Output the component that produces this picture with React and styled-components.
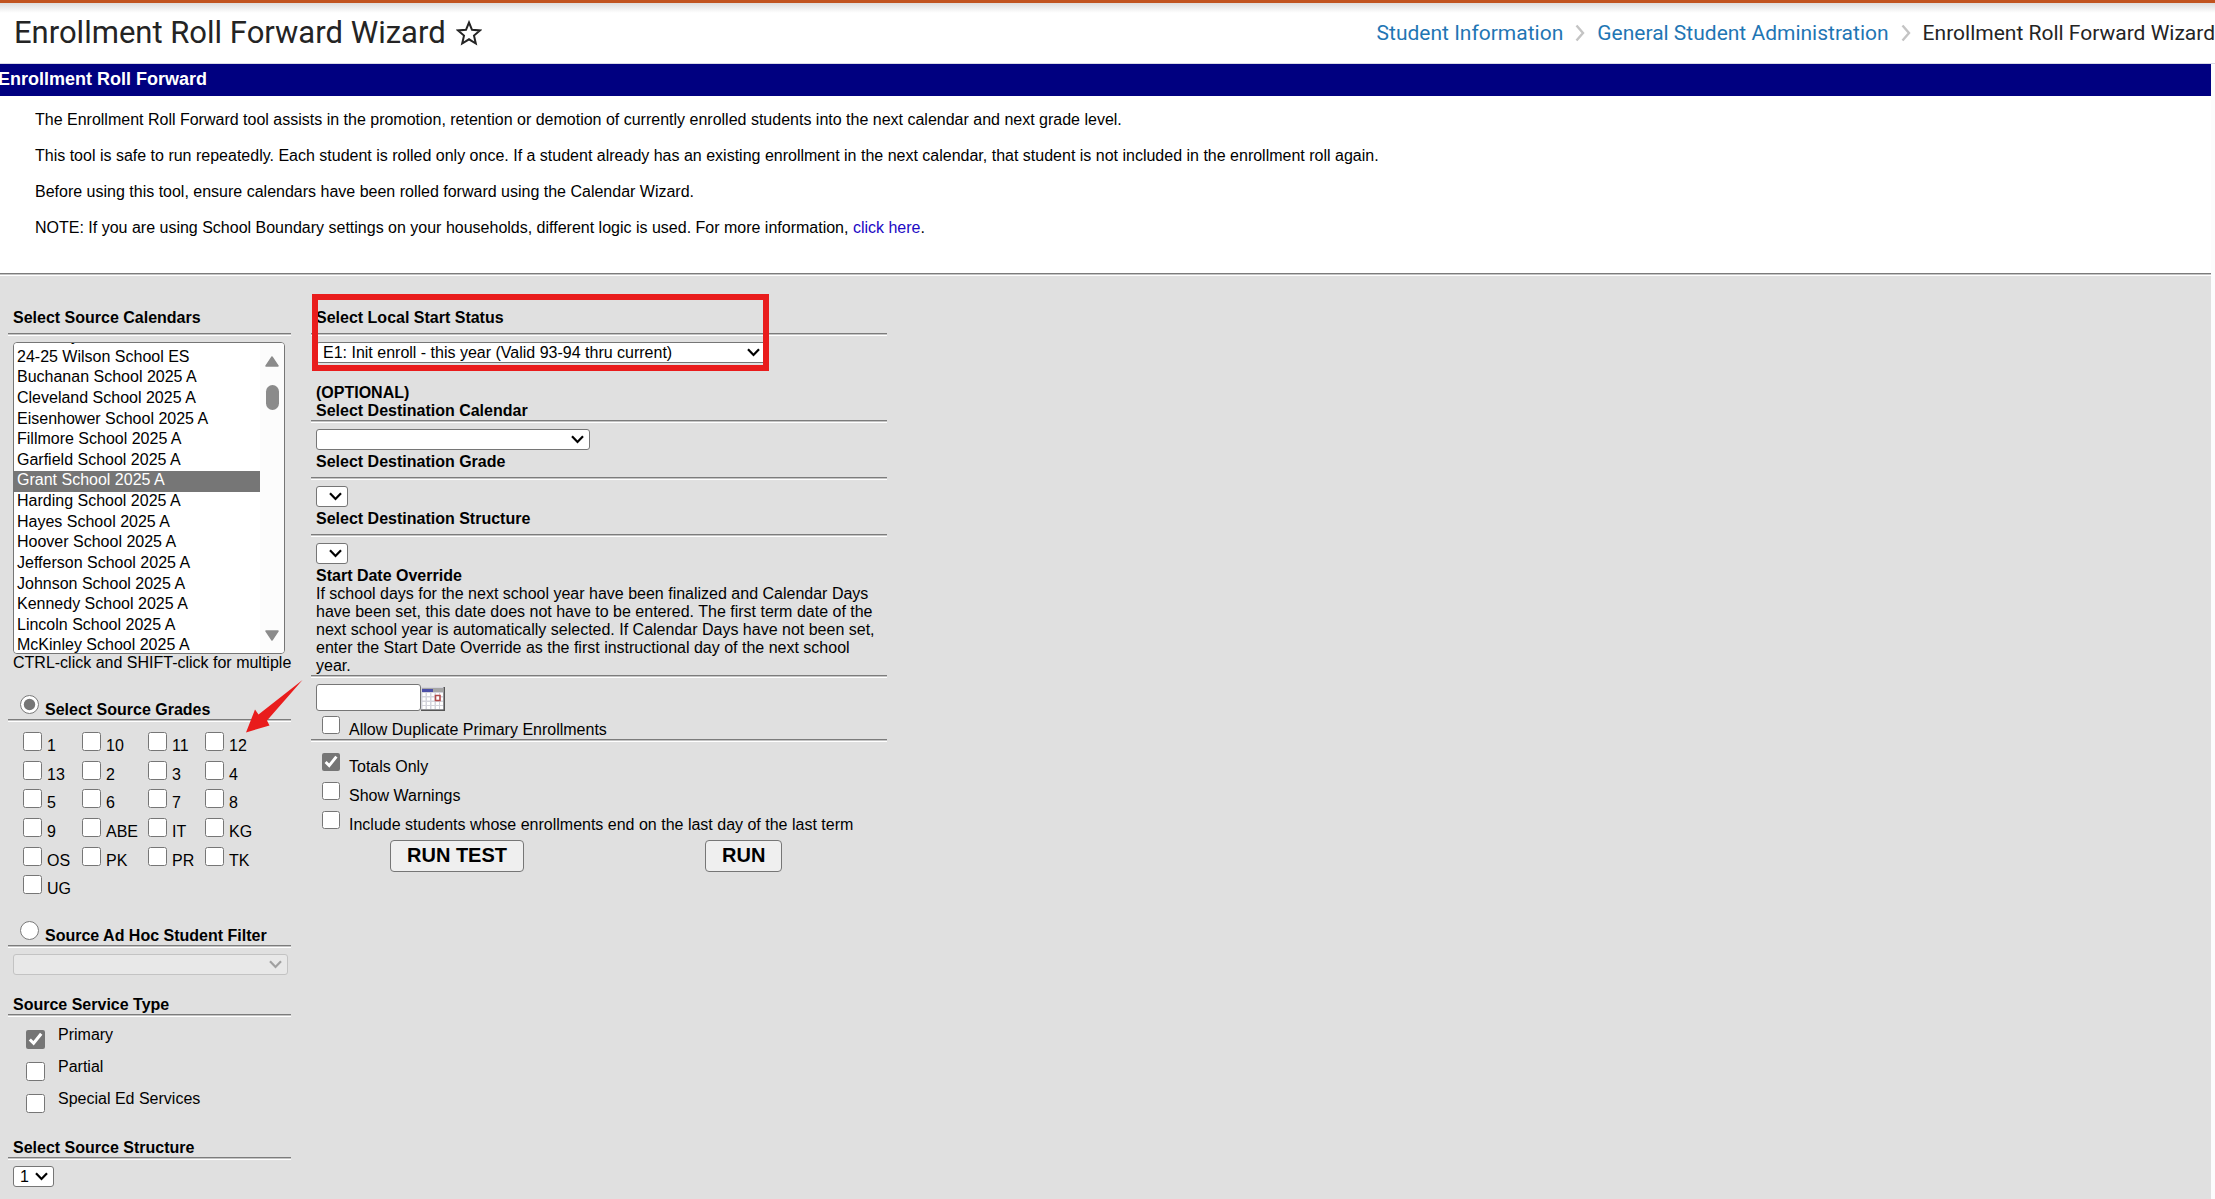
import React, { useLayoutEffect, useRef } from "react";
import styled, { createGlobalStyle } from "styled-components";

const sans = `"Liberation Sans", Arial, Helvetica, sans-serif`;

const GlobalStyle = createGlobalStyle`
  *, *::before, *::after { box-sizing: border-box; }
  html, body { margin: 0; background: #fcfcfc; }
  body {
    overflow-x: hidden;
    font: 16px/18px ${sans};
    color: #000;
  }
  input, select, button { font-family: inherit; margin: 0; }
`;

const Page = styled.div`
  position: relative;
  display: flex;
  flex-direction: column;
  min-height: 100vh;
`;

const TopBar = styled.header`
  display: flex;
  align-items: center;
  justify-content: space-between;
  height: 64px;
  padding-left: 14px;
  border-top: 3px solid #c1531f;
  border-bottom: 1px solid #d9d9e6;
  background: linear-gradient(#dcdcdc, #fff 10px);
  font-family: Roboto, sans-serif;
  white-space: nowrap;
`;

const TitleGroup = styled.div`
  display: flex;
  align-items: center;
  gap: 10px;
`;

const Title = styled.h1`
  margin: 0;
  font-size: 31px;
  line-height: 40px;
  font-weight: 400;
  color: #242424;
`;

const StarButton = styled.button`
  display: flex;
  padding: 0;
  border: 0;
  background: none;
`;

const Crumbs = styled.nav`
  display: flex;
  align-items: center;
  gap: 12px;
  font-size: 21px;
  line-height: 24px;
  color: #242424;
`;

const CrumbLink = styled.a`
  color: #1f76b4;
  text-decoration: none;
`;

const Workspace = styled.main`
  flex: 1;
  margin-right: 4px;
  background: #e0e0e0;
`;

const Banner = styled.h2`
  margin: 0;
  height: 32px;
  text-indent: -2px;
  background: #000080;
  color: #fff;
  font-size: 18px;
  line-height: 31px;
`;

const Intro = styled.section`
  display: flex;
  flex-direction: column;
  gap: 18px;
  padding: 15px 35px 36px;
  background: #fff;
`;

const Paragraph = styled.p`
  margin: 0;
`;

const InlineLink = styled.a`
  color: #2008c4;
  text-decoration: none;
`;

const Rule = styled.hr`
  height: 3px;
  margin: 0;
  border: 0;
  border-top: 1px solid #7c7c7c;
  border-bottom: 1px solid #fff;
  background: #c4c4c4;
`;

const Form = styled.form`
  display: grid;
  grid-template-columns: 283px 576px;
  align-items: start;
  column-gap: 20px;
  padding: 33px 8px 12px;
`;

const Column = styled.div`
  display: flex;
  flex-direction: column;
`;

const Heading = styled.h3`
  margin: 0;
  padding: 0 5px ${(p) => p.$below || 0}px;
  font-size: 16px;
  line-height: 18px;
  font-weight: 700;
`;

const Body = styled.div`
  display: flex;
  flex-direction: column;
  align-items: flex-start;
  padding: 6px 0 ${(p) => p.$below || 0}px 5px;
`;

const Note = styled.p`
  margin: 0;
  padding: 0 5px;
`;

const ListNote = styled.p`
  margin: 0;
  padding: 0 0 23px 5px;
  white-space: nowrap;
`;

const ListFrame = styled.div`
  display: flex;
  width: 272px;
  height: 312px;
  border: 1px solid #767676;
  border-radius: 4px;
  overflow: hidden;
  background: #fff;
`;

const CalendarList = styled.select`
  flex: 1;
  height: 100%;
  padding: 0;
  border: 0;
  outline: 0;
  overflow: hidden;
  background: #fff;
  color: #000;
  font-size: 16px;

  option {
    min-height: 1.29em;
    padding: 0 3px 1px;
  }
  option:checked {
    background: linear-gradient(#767676, #767676);
    -webkit-text-fill-color: #fff;
  }
`;

const ScrollTrack = styled.div`
  display: flex;
  flex-direction: column;
  align-items: center;
  width: 24px;
  padding: 13px 0 12px;
  background: #fcfcfc;
`;

const ScrollThumb = styled.span`
  width: 13px;
  height: 25px;
  margin: 18px 0 auto;
  border-radius: 7px;
  background: #8b8b8b;
`;

const SelectBox = styled.span`
  position: relative;
  display: block;
  width: ${(p) => p.$width}px;
  height: 21px;
  color: ${(p) => (p.$muted ? "#a0a0a0" : "#000")};

  svg {
    position: absolute;
    top: 6px;
    right: 6px;
    pointer-events: none;
  }
`;

const SelectInput = styled.select`
  appearance: none;
  display: block;
  width: 100%;
  height: 100%;
  padding: 0 20px 0 6px;
  border: 1px solid #767676;
  border-radius: 3px;
  background: #fff;
  color: #000;
  font-size: 16px;
  line-height: 19px;

  &:disabled {
    border-color: #c3c3c3;
    background: #e8e8e8;
    opacity: 1;
  }
`;

const Tick = styled.input`
  flex: none;
  width: ${(p) => p.$size || 19}px;
  height: ${(p) => p.$size || 19}px;
  accent-color: #767676;
`;

const RadioLabel = styled.label`
  display: flex;
  align-items: flex-end;
  gap: 6px;
  height: 24px;
  padding-left: 12px;
  font-weight: 700;

  input {
    margin-bottom: 5px;
  }
`;

const Grades = styled.div`
  display: grid;
  grid-template-columns: 59px 66px 57px auto;
  grid-template-rows: repeat(6, 1fr);
  min-height: 172px;
  margin: 10px 0 17px 15px;
`;

const GradeLabel = styled.label`
  display: flex;
  gap: 5px;

  span {
    padding-top: 5px;
  }
`;

const Services = styled.div`
  display: grid;
  grid-auto-rows: 32px;
  padding: 9px 0 17px 18px;
`;

const ServiceLabel = styled.label`
  display: flex;
  gap: 13px;

  input {
    margin-top: 4px;
  }
`;

const OptionLabel = styled.label`
  display: flex;
  gap: 9px;
  height: ${(p) => p.$height}px;
  padding-left: 11px;

  span {
    padding-top: 5px;
  }
`;

const Options = styled.div`
  padding-top: 11px;
`;

const DateRow = styled.div`
  display: flex;
  align-items: flex-end;
  padding: 6px 0 5px 5px;
`;

const DateInput = styled.input`
  width: 105px;
  height: 27px;
  padding: 2px 4px;
  border: 1px solid #767676;
  border-radius: 3px;
  background: #fff;
  font-size: 16px;
`;

const CalendarButton = styled.button`
  display: flex;
  padding: 0;
  border: 0;
  background: none;
`;

const Actions = styled.div`
  display: flex;
  gap: 181px;
  padding-left: 79px;
`;

const ActionButton = styled.button`
  height: 32px;
  padding: 0 16px 2px;
  border: 1px solid #767676;
  border-radius: 4px;
  background: #efefef;
  color: #000;
  font-size: 20px;
  line-height: 24px;
  font-weight: 700;
`;

const Highlight = styled.div`
  position: absolute;
  top: 294px;
  left: 312px;
  width: 457px;
  height: 77px;
  border: 6px solid #e91c1c;
  pointer-events: none;
`;

const Pointer = styled.svg`
  position: absolute;
  top: 679px;
  left: 245px;
  pointer-events: none;
`;

const calendars = [
  "24-25 Tyler School ES",
  "24-25 Wilson School ES",
  "Buchanan School 2025 A",
  "Cleveland School 2025 A",
  "Eisenhower School 2025 A",
  "Fillmore School 2025 A",
  "Garfield School 2025 A",
  "Grant School 2025 A",
  "Harding School 2025 A",
  "Hayes School 2025 A",
  "Hoover School 2025 A",
  "Jefferson School 2025 A",
  "Johnson School 2025 A",
  "Kennedy School 2025 A",
  "Lincoln School 2025 A",
  "McKinley School 2025 A",
  "Monroe School 2025 A",
  "Pierce School 2025 A",
];

const grades = [
  "1", "10", "11", "12", "13", "2", "3", "4", "5", "6", "7",
  "8", "9", "ABE", "IT", "KG", "OS", "PK", "PR", "TK", "UG",
];

const services = ["Primary", "Partial", "Special Ed Services"];

function Chevron() {
  return (
    <svg width="13" height="9" viewBox="0 0 13 9" fill="none" aria-hidden="true">
      <path d="M1 1.200 6.500 7 12 1.200" stroke="currentColor" strokeWidth="2.200" />
    </svg>
  );
}

function Dropdown({ label, width, value = "", disabled }) {
  return (
    <SelectBox $width={width} $muted={disabled}>
      <SelectInput aria-label={label} defaultValue={value} disabled={disabled}>
        <option value={value}>{value}</option>
      </SelectInput>
      <Chevron />
    </SelectBox>
  );
}

function CrumbArrow() {
  return (
    <svg width="10" height="18" viewBox="0 0 10 18" fill="none" aria-hidden="true">
      <path d="M1.500 1.500 8 9l-6.500 7.500" stroke="#c4c4c4" strokeWidth="2.400" />
    </svg>
  );
}

function SourceCalendars() {
  const list = useRef(null);
  useLayoutEffect(() => {
    list.current.scrollTop = 16;
  }, []);
  return (
    <ListFrame>
      <CalendarList
        ref={list}
        multiple
        size={15}
        aria-label="Select Source Calendars"
        defaultValue={["Grant School 2025 A"]}
      >
        {calendars.map((name) => (
          <option key={name}>{name}</option>
        ))}
      </CalendarList>
      <ScrollTrack aria-hidden="true">
        <svg width="14" height="11" viewBox="0 0 14 11">
          <path d="M7 1 13 10H1Z" fill="#8b8b8b" stroke="#8b8b8b" strokeWidth="1.500" strokeLinejoin="round" />
        </svg>
        <ScrollThumb />
        <svg width="14" height="11" viewBox="0 0 14 11">
          <path d="M7 10 13 1H1Z" fill="#8b8b8b" stroke="#8b8b8b" strokeWidth="1.500" strokeLinejoin="round" />
        </svg>
      </ScrollTrack>
    </ListFrame>
  );
}

function CalendarIcon() {
  return (
    <svg width="24" height="24" viewBox="0 0 24 24" aria-hidden="true">
      <path d="M0 0h24v24H0z" fill="#555" />
      <path d="M0 0h22.500v22.500H0z" fill="#d4d4dc" />
      <path d="M1 1h21.500v4H1z" fill="#a6a6a6" />
      <path d="M1 2h11v3H1z" fill="#4b4fa8" />
      <path
        d="M1.500 6h3v3h-3zM6 6h3v3H6zM10.500 6h3v3h-3zM19 6h3v3h-3zM15 6h3v3h-3zM1.500 10.500h3v3h-3zM6 10.500h3v3H6zM10.500 10.500h3v3h-3zM19 10.500h3v3h-3zM1.500 15h3v3h-3zM6 15h3v3H6zM10.500 15h3v3h-3zM15 15h3v3h-3zM19 15h3v3h-3zM1.500 19h3v3h-3zM6 19h3v3H6zM10.500 19h3v3h-3zM15 19h3v3h-3zM19 19h3v3h-3z"
        fill="#fff"
      />
      <path d="M14.500 8.500h4.500v5h-4.500z" fill="#fff" stroke="#b04a4a" strokeWidth="1.600" />
    </svg>
  );
}

export default function App() {
  return (
    <Page>
      <GlobalStyle />
      <TopBar>
        <TitleGroup>
          <Title>Enrollment Roll Forward Wizard</Title>
          <StarButton type="button" aria-label="Add to favorites">
            <svg width="26" height="26" viewBox="0 0 26 26" fill="none" aria-hidden="true">
              <path
                d="M13 2.500 16 9.800 24 10.400 18 15.600 19.800 23.500 13 19.300 6.200 23.500 8 15.600 2 10.400 10 9.800Z"
                stroke="#242424"
                strokeWidth="2"
              />
            </svg>
          </StarButton>
        </TitleGroup>
        <Crumbs aria-label="Breadcrumb">
          <CrumbLink href="#student-information">Student Information</CrumbLink>
          <CrumbArrow />
          <CrumbLink href="#general">General Student Administration</CrumbLink>
          <CrumbArrow />
          <span>Enrollment Roll Forward Wizard</span>
        </Crumbs>
      </TopBar>
      <Workspace>
        <Banner>Enrollment Roll Forward</Banner>
        <Intro>
          <Paragraph>
            The Enrollment Roll Forward tool assists in the promotion, retention or demotion of currently enrolled
            students into the next calendar and next grade level.
          </Paragraph>
          <Paragraph>
            This tool is safe to run repeatedly. Each student is rolled only once. If a student already has an existing
            enrollment in the next calendar, that student is not included in the enrollment roll again.
          </Paragraph>
          <Paragraph>
            Before using this tool, ensure calendars have been rolled forward using the Calendar Wizard.
          </Paragraph>
          <Paragraph>
            NOTE: If you are using School Boundary settings on your households, different logic is used. For more
            information, <InlineLink href="#boundary">click here</InlineLink>.
          </Paragraph>
        </Intro>
        <Rule />
        <Form onSubmit={(e) => e.preventDefault()}>
          <Column>
            <Heading $below={6}>Select Source Calendars</Heading>
            <Rule />
            <Body>
              <SourceCalendars />
            </Body>
            <ListNote>CTRL-click and SHIFT-click for multiple</ListNote>

            <RadioLabel>
              <Tick type="radio" name="source" defaultChecked />
              Select Source Grades
            </RadioLabel>
            <Rule />
            <Grades>
              {grades.map((grade) => (
                <GradeLabel key={grade}>
                  <Tick type="checkbox" />
                  <span>{grade}</span>
                </GradeLabel>
              ))}
            </Grades>

            <RadioLabel>
              <Tick type="radio" name="source" />
              Source Ad Hoc Student Filter
            </RadioLabel>
            <Rule />
            <Body $below={21}>
              <Dropdown label="Source Ad Hoc Student Filter" width={275} disabled />
            </Body>

            <Heading>Source Service Type</Heading>
            <Rule />
            <Services>
              {services.map((service) => (
                <ServiceLabel key={service}>
                  <Tick type="checkbox" defaultChecked={service === "Primary"} />
                  <span>{service}</span>
                </ServiceLabel>
              ))}
            </Services>

            <Heading>Select Source Structure</Heading>
            <Rule />
            <Body>
              <Dropdown label="Select Source Structure" width={41} value="1" />
            </Body>
          </Column>

          <Column>
            <Heading $below={6}>Select Local Start Status</Heading>
            <Rule />
            <Body $below={21}>
              <Dropdown
                label="Select Local Start Status"
                width={450}
                value="E1: Init enroll - this year (Valid 93-94 thru current)"
              />
            </Body>

            <Heading as="p">(OPTIONAL)</Heading>
            <Heading>Select Destination Calendar</Heading>
            <Rule />
            <Body $below={3}>
              <Dropdown label="Select Destination Calendar" width={274} />
            </Body>

            <Heading $below={6}>Select Destination Grade</Heading>
            <Rule />
            <Body $below={3}>
              <Dropdown label="Select Destination Grade" width={32} />
            </Body>

            <Heading $below={6}>Select Destination Structure</Heading>
            <Rule />
            <Body $below={3}>
              <Dropdown label="Select Destination Structure" width={32} />
            </Body>

            <Heading as="label" htmlFor="start-date">
              Start Date Override
            </Heading>
            <Note>
              If school days for the next school year have been finalized and Calendar Days have been set, this date
              does not have to be entered. The first term date of the next school year is automatically selected. If
              Calendar Days have not been set, enter the Start Date Override as the first instructional day of the next
              school year.
            </Note>
            <Rule />
            <DateRow>
              <DateInput id="start-date" type="text" />
              <CalendarButton type="button" aria-label="Pick a date">
                <CalendarIcon />
              </CalendarButton>
            </DateRow>
            <OptionLabel $height={23}>
              <Tick type="checkbox" $size={18} />
              <span>Allow Duplicate Primary Enrollments</span>
            </OptionLabel>
            <Rule />
            <Options>
              <OptionLabel $height={29}>
                <Tick type="checkbox" $size={18} defaultChecked />
                <span>Totals Only</span>
              </OptionLabel>
              <OptionLabel $height={29}>
                <Tick type="checkbox" $size={18} />
                <span>Show Warnings</span>
              </OptionLabel>
              <OptionLabel $height={29}>
                <Tick type="checkbox" $size={18} />
                <span>Include students whose enrollments end on the last day of the last term</span>
              </OptionLabel>
            </Options>
            <Actions>
              <ActionButton type="submit">RUN TEST</ActionButton>
              <ActionButton type="submit">RUN</ActionButton>
            </Actions>
          </Column>
        </Form>
      </Workspace>
      <Highlight />
      <Pointer width="60" height="56" viewBox="0 0 60 56" aria-hidden="true">
        <path d="M57.500 1 22 41.500 24.500 46.500 1 53.500 10 30.500 13.500 35.500Z" fill="#e91c1c" />
      </Pointer>
    </Page>
  );
}
